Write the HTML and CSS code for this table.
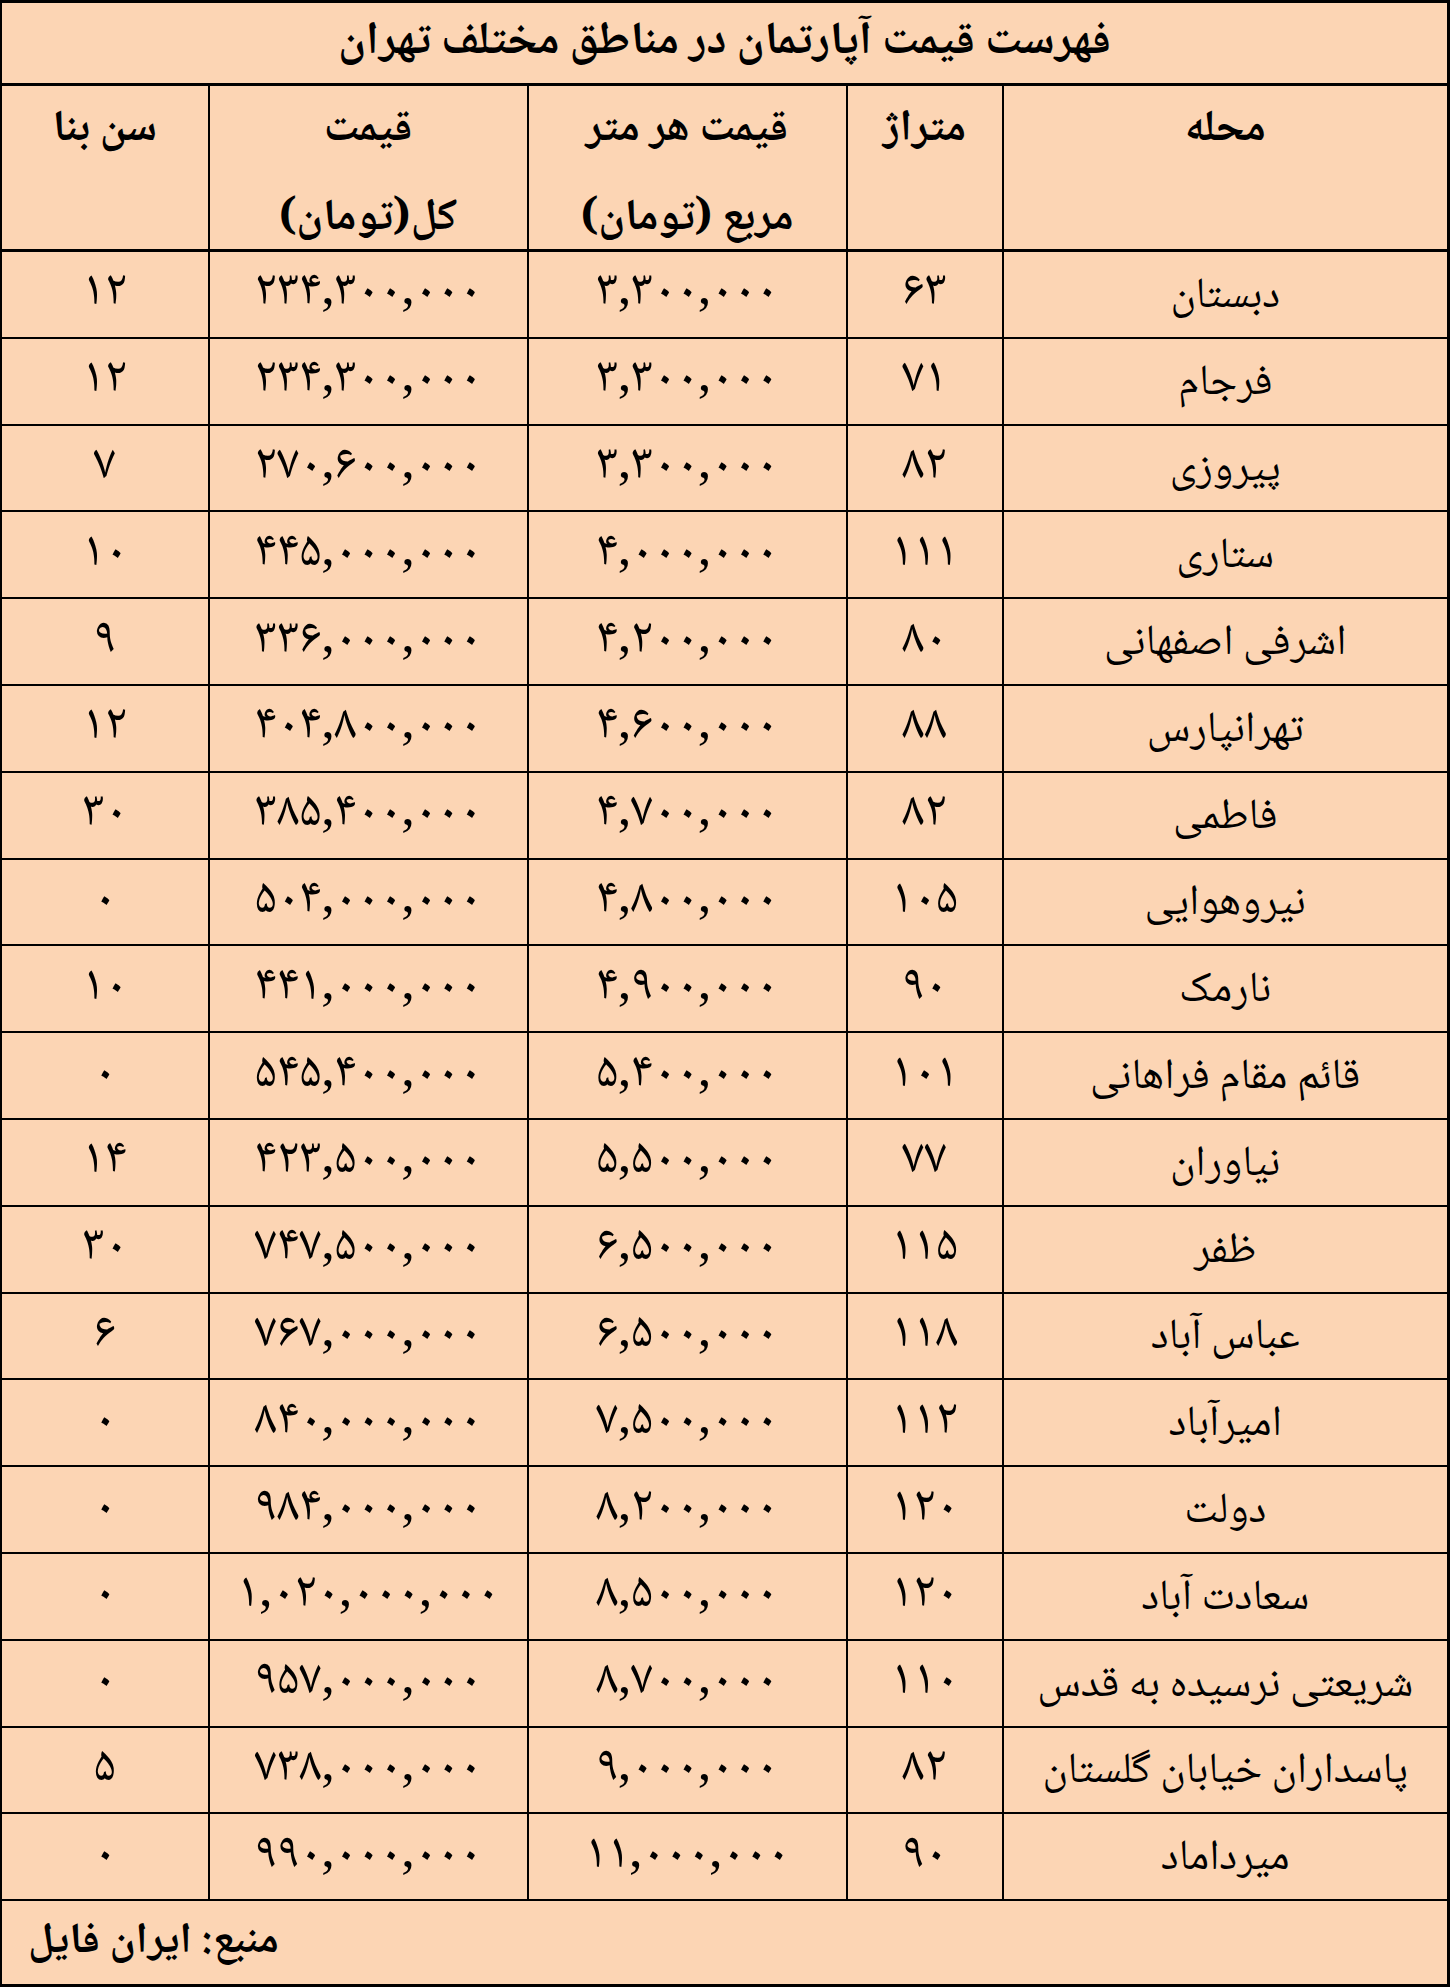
FILE: index.html
```html
<!DOCTYPE html>
<html lang="fa" dir="rtl">
<head>
<meta charset="utf-8">
<title>فهرست قیمت آپارتمان در مناطق مختلف تهران</title>
<link rel="stylesheet" href="styles.css">
</head>
<body>
<table class="prices">
  <colgroup>
    <col class="c-name">
    <col class="c-area">
    <col class="c-unit">
    <col class="c-total">
    <col class="c-age">
  </colgroup>
  <thead>
    <tr class="r-title"><th colspan="5" class="title">فهرست قیمت آپارتمان در مناطق مختلف تهران</th></tr>
    <tr class="r-head">
      <th><div class="hd">محله</div></th>
      <th><div class="hd">متراژ</div></th>
      <th><div class="hd">قیمت هر متر<br>مربع (تومان)</div></th>
      <th><div class="hd">قیمت<br>کل(تومان)</div></th>
      <th><div class="hd">سن بنا</div></th>
    </tr>
  </thead>
  <tbody>
    <tr><td>دبستان</td><td>۶۳</td><td>۳,۳۰۰,۰۰۰</td><td>۲۳۴,۳۰۰,۰۰۰</td><td>۱۲</td></tr>
    <tr><td>فرجام</td><td>۷۱</td><td>۳,۳۰۰,۰۰۰</td><td>۲۳۴,۳۰۰,۰۰۰</td><td>۱۲</td></tr>
    <tr><td>پیروزی</td><td>۸۲</td><td>۳,۳۰۰,۰۰۰</td><td>۲۷۰,۶۰۰,۰۰۰</td><td>۷</td></tr>
    <tr><td>ستاری</td><td>۱۱۱</td><td>۴,۰۰۰,۰۰۰</td><td>۴۴۵,۰۰۰,۰۰۰</td><td>۱۰</td></tr>
    <tr><td>اشرفی اصفهانی</td><td>۸۰</td><td>۴,۲۰۰,۰۰۰</td><td>۳۳۶,۰۰۰,۰۰۰</td><td>۹</td></tr>
    <tr><td>تهرانپارس</td><td>۸۸</td><td>۴,۶۰۰,۰۰۰</td><td>۴۰۴,۸۰۰,۰۰۰</td><td>۱۲</td></tr>
    <tr><td>فاطمی</td><td>۸۲</td><td>۴,۷۰۰,۰۰۰</td><td>۳۸۵,۴۰۰,۰۰۰</td><td>۳۰</td></tr>
    <tr><td>نیروهوایی</td><td>۱۰۵</td><td>۴,۸۰۰,۰۰۰</td><td>۵۰۴,۰۰۰,۰۰۰</td><td>۰</td></tr>
    <tr><td>نارمک</td><td>۹۰</td><td>۴,۹۰۰,۰۰۰</td><td>۴۴۱,۰۰۰,۰۰۰</td><td>۱۰</td></tr>
    <tr><td>قائم مقام فراهانی</td><td>۱۰۱</td><td>۵,۴۰۰,۰۰۰</td><td>۵۴۵,۴۰۰,۰۰۰</td><td>۰</td></tr>
    <tr><td>نیاوران</td><td>۷۷</td><td>۵,۵۰۰,۰۰۰</td><td>۴۲۳,۵۰۰,۰۰۰</td><td>۱۴</td></tr>
    <tr><td>ظفر</td><td>۱۱۵</td><td>۶,۵۰۰,۰۰۰</td><td>۷۴۷,۵۰۰,۰۰۰</td><td>۳۰</td></tr>
    <tr><td>عباس آباد</td><td>۱۱۸</td><td>۶,۵۰۰,۰۰۰</td><td>۷۶۷,۰۰۰,۰۰۰</td><td>۶</td></tr>
    <tr><td>امیرآباد</td><td>۱۱۲</td><td>۷,۵۰۰,۰۰۰</td><td>۸۴۰,۰۰۰,۰۰۰</td><td>۰</td></tr>
    <tr><td>دولت</td><td>۱۲۰</td><td>۸,۲۰۰,۰۰۰</td><td>۹۸۴,۰۰۰,۰۰۰</td><td>۰</td></tr>
    <tr><td>سعادت آباد</td><td>۱۲۰</td><td>۸,۵۰۰,۰۰۰</td><td>۱,۰۲۰,۰۰۰,۰۰۰</td><td>۰</td></tr>
    <tr><td>شریعتی نرسیده به قدس</td><td>۱۱۰</td><td>۸,۷۰۰,۰۰۰</td><td>۹۵۷,۰۰۰,۰۰۰</td><td>۰</td></tr>
    <tr><td>پاسداران خیابان گلستان</td><td>۸۲</td><td>۹,۰۰۰,۰۰۰</td><td>۷۳۸,۰۰۰,۰۰۰</td><td>۵</td></tr>
    <tr><td>میرداماد</td><td>۹۰</td><td>۱۱,۰۰۰,۰۰۰</td><td>۹۹۰,۰۰۰,۰۰۰</td><td>۰</td></tr>
  </tbody>
  <tfoot>
    <tr class="r-foot"><td colspan="5" class="source">منبع: ایران فایل</td></tr>
  </tfoot>
</table>
</body>
</html>
```
FILE: styles.css
```css
html, body {
  margin: 0;
  padding: 0;
  background: #ffffff;
}

body {
  font-family: "Noto Naskh Arabic", "Noto Sans Arabic", "DejaVu Sans", sans-serif;
  color: #000;
}

.prices {
  border-collapse: collapse;
  table-layout: fixed;
  width: 1448px;
  background: #fcd5b4;
  border: 3px solid #000;
}

.c-name { width: 446px; }
.c-area { width: 156px; }
.c-unit { width: 319px; }
.c-total { width: 319px; }
.c-age { width: 208px; }

.prices th,
.prices td {
  border: 2px solid #000;
  padding: 0;
  text-align: center;
  vertical-align: middle;
}

.prices tbody td {
  height: 78.8px;
  padding-top: 6px;
  font-size: 43px;
  font-weight: 400;
  line-height: 1;
}

.prices tbody td + td {
  height: 84.8px;
  padding-top: 0;
  font-size: 50px;
}

.r-title th {
  height: 80px;
  border-bottom-width: 3px;
  font-size: 46px;
  font-weight: 700;
  line-height: 1;
}

.r-head th {
  vertical-align: top;
  border-bottom-width: 3px;
  font-size: 44px;
  font-weight: 700;
}

.hd {
  height: 163px;
  line-height: 89px;
}

.r-foot td {
  height: 83px;
  text-align: left;
  padding-left: 26px;
  font-size: 43px;
  font-weight: 700;
  line-height: 1;
}
```
